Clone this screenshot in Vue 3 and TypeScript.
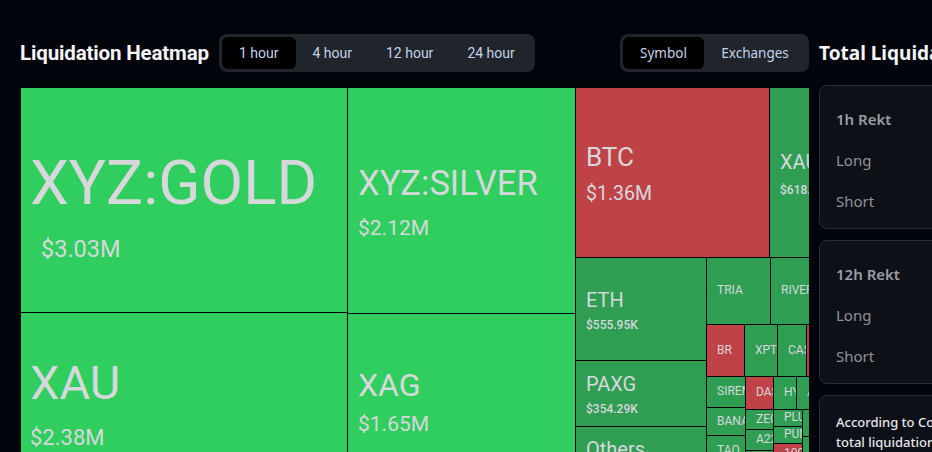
<script setup lang="ts">
type Tone = 'bright' | 'green' | 'red';

interface Cell {
  name: string;
  value?: string;
  x: number;
  y: number;
  w: number;
  h: number;
  tone: Tone;
  size: number;
  valueSize?: number;
  pad: number;
  valuePad?: number;
  gap?: number;
  padTop?: number;
}

const timeTabs = ['1 hour', '4 hour', '12 hour', '24 hour'];
const groupTabs = ['Symbol', 'Exchanges'];

const cells: Cell[] = [
  { name: 'XYZ:GOLD', value: '$3.03M', x: 1, y: 1, w: 326, h: 224, tone: 'bright', size: 62, valueSize: 23.5, pad: 9, valuePad: 11, gap: 16, padTop: 10 },
  { name: 'XAU', value: '$2.38M', x: 1, y: 226, w: 326, h: 182, tone: 'bright', size: 47, valueSize: 22, pad: 9, gap: 15 },
  { name: 'XYZ:SILVER', value: '$2.12M', x: 328, y: 1, w: 227, h: 225, tone: 'bright', size: 34.5, valueSize: 21, pad: 10, gap: 12, padTop: 4 },
  { name: 'XAG', value: '$1.65M', x: 328, y: 227, w: 227, h: 176, tone: 'bright', size: 32, valueSize: 21, pad: 10, gap: 9 },
  { name: 'BTC', value: '$1.36M', x: 556, y: 1, w: 193, h: 169, tone: 'red', size: 26, valueSize: 19.5, pad: 10, gap: 9, padTop: 3 },
  { name: 'XAU', value: '$618.32K', x: 750, y: 1, w: 39, h: 169, tone: 'green', size: 20, valueSize: 12, pad: 10, gap: 9, padTop: 3 },
  { name: 'ETH', value: '$555.95K', x: 556, y: 171, w: 130, h: 102, tone: 'green', size: 20, valueSize: 12, pad: 10, padTop: 4 },
  { name: 'PAXG', value: '$354.29K', x: 556, y: 274, w: 130, h: 65, tone: 'green', size: 20, valueSize: 12, pad: 10, padTop: 2 },
  { name: 'Others', x: 556, y: 340, w: 130, h: 44, tone: 'green', size: 20, pad: 10 },
  { name: 'TRIA', x: 687, y: 171, w: 63, h: 66, tone: 'green', size: 12, pad: 10 },
  { name: 'RIVER', x: 751, y: 171, w: 38, h: 66, tone: 'green', size: 12, pad: 10 },
  { name: 'BR', x: 687, y: 238, w: 37, h: 51, tone: 'red', size: 12, pad: 10 },
  { name: 'XPT', x: 725, y: 238, w: 32, h: 51, tone: 'green', size: 12, pad: 10 },
  { name: 'CAS', x: 758, y: 238, w: 28, h: 51, tone: 'green', size: 12, pad: 10 },
  { name: '', x: 787, y: 238, w: 2, h: 51, tone: 'red', size: 12, pad: 0 },
  { name: 'SIREN', x: 687, y: 290, w: 38, h: 30, tone: 'green', size: 12, pad: 10 },
  { name: 'BANANA', x: 687, y: 321, w: 38, h: 27, tone: 'green', size: 12, pad: 10 },
  { name: 'TAO', x: 687, y: 349, w: 38, h: 30, tone: 'green', size: 12, pad: 10 },
  { name: 'DASH', x: 726, y: 290, w: 27, h: 32, tone: 'red', size: 12, pad: 10 },
  { name: 'ZEC', x: 726, y: 323, w: 27, h: 19, tone: 'green', size: 12, pad: 10 },
  { name: 'A22', x: 726, y: 343, w: 27, h: 20, tone: 'green', size: 12, pad: 10 },
  { name: '', x: 726, y: 364, w: 27, h: 20, tone: 'green', size: 12, pad: 0 },
  { name: 'HYPE', x: 754, y: 290, w: 22, h: 32, tone: 'green', size: 12, pad: 10 },
  { name: 'AV', x: 777, y: 290, w: 12, h: 32, tone: 'green', size: 12, pad: 10 },
  { name: 'PLUME', x: 754, y: 323, w: 28, h: 16, tone: 'green', size: 12, pad: 10 },
  { name: 'PUMP', x: 754, y: 340, w: 28, h: 16, tone: 'green', size: 12, pad: 10 },
  { name: '100', x: 754, y: 357, w: 28, h: 20, tone: 'red', size: 12, pad: 10 },
  { name: '', x: 783, y: 323, w: 6, h: 26, tone: 'green', size: 12, pad: 0 },
  { name: '', x: 783, y: 350, w: 6, h: 30, tone: 'green', size: 12, pad: 0 },
];

function cellStyle(c: Cell) {
  return {
    left: `${c.x}px`,
    top: `${c.y}px`,
    width: `${c.w}px`,
    height: `${c.h}px`,
    paddingLeft: `${c.pad}px`,
    paddingTop: `${c.padTop ?? 0}px`,
    gap: `${c.gap ?? 6}px`,
  };
}

const cards = [
  { title: '1h Rekt', rows: ['Long', 'Short'] },
  { title: '12h Rekt', rows: ['Long', 'Short'] },
];
</script>

<template>
  <div class="page">
    <section class="left">
      <header class="head">
        <h1 class="title">Liquidation Heatmap</h1>
        <div class="tabs time">
          <span v-for="(t, i) in timeTabs" :key="t" class="tab" :class="{ active: i === 0 }">{{ t }}</span>
        </div>
        <div class="tabs group">
          <span v-for="(t, i) in groupTabs" :key="t" class="tab" :class="{ active: i === 0 }">{{ t }}</span>
        </div>
      </header>
      <div class="map">
        <div
          v-for="(c, i) in cells"
          :key="i"
          class="cell"
          :class="c.tone"
          :style="cellStyle(c)"
        >
          <span class="name" :style="{ fontSize: c.size + 'px' }">{{ c.name }}</span>
          <span
            v-if="c.value"
            class="value"
            :class="{ small: (c.valueSize ?? 0) <= 12 }"
            :style="{ fontSize: c.valueSize + 'px', marginLeft: (c.valuePad ?? 0) + 'px' }"
          >{{ c.value }}</span>
        </div>
      </div>
    </section>

    <aside class="right">
      <h2 class="side-title">Total Liquidations</h2>
      <div v-for="card in cards" :key="card.title" class="card">
        <div class="card-title">{{ card.title }}</div>
        <div v-for="r in card.rows" :key="r" class="card-row">{{ r }}</div>
      </div>
      <div class="card note">
        According to Coinglass data,<br />
        total liquidations
      </div>
    </aside>
  </div>
</template>

<style>
html,
body {
  margin: 0;
  background: #02040c;
  overflow: hidden;
}
</style>

<style scoped>
.page {
  display: flex;
  gap: 10px;
  width: 932px;
  height: 452px;
  padding: 34px 0 0 20px;
  box-sizing: border-box;
  overflow: hidden;
  background: #02040c;
}
.left {
  flex: 0 0 789px;
}
.head {
  display: flex;
  align-items: center;
  height: 38px;
  margin-bottom: 15px;
}
.title {
  width: 189px;
  margin: 0 10px 0 0;
  font: 700 20.5px/24px Roboto, sans-serif;
  letter-spacing: -0.15px;
  color: #f4f5f7;
  white-space: nowrap;
}
.tabs {
  display: flex;
  height: 38px;
  padding: 3px;
  box-sizing: border-box;
  background: #20242b;
  border-radius: 8px;
}
.group {
  margin-left: auto;
  font-family: "Noto Sans", sans-serif;
}
.time {
  font-family: Roboto, sans-serif;
}
.tab {
  display: flex;
  align-items: center;
  padding: 0 17px;
  font-size: 14px;
  color: #c3d4ea;
  border-radius: 6px;
  white-space: nowrap;
}
.group .tab {
  font-size: 13.5px;
  padding: 0 17.2px;
}
.tab.active {
  background: #000;
}
.map {
  position: relative;
  height: 400px;
  background: #000;
  overflow: hidden;
}
.cell {
  position: absolute;
  display: flex;
  flex-direction: column;
  justify-content: center;
  align-items: flex-start;
  box-sizing: border-box;
  overflow: hidden;
  font-family: Roboto, sans-serif;
  color: #d6d8dc;
  white-space: nowrap;
}
.cell.bright {
  background: #2fce5e;
}
.cell.green {
  background: #2f9e53;
}
.cell.red {
  background: #bf4247;
}
.name {
  line-height: 1.15;
}
.value {
  line-height: 1.2;
}
.value.small {
  font-weight: 500;
}
.right {
  flex: 0 0 300px;
  display: flex;
  flex-direction: column;
  gap: 11px;
  font-family: "Noto Sans", sans-serif;
}
.side-title {
  margin: 7px 0 9px;
  font: 700 19px/24px "Noto Sans", sans-serif;
  color: #f4f5f7;
  white-space: nowrap;
}
.card {
  padding: 13px 16px 6px;
  background: #0d1017;
  border: 1px solid #2a2d33;
  border-radius: 8px;
  box-sizing: border-box;
}
.card-title {
  height: 41px;
  font-size: 15px;
  font-weight: 600;
  line-height: 41px;
  color: #9a9da3;
}
.card-row {
  height: 41px;
  font-size: 15px;
  line-height: 41px;
  color: #8f9298;
}
.note {
  padding-top: 16px;
  font-size: 13px;
  font-weight: 500;
  line-height: 20px;
  color: #e5e7eb;
  white-space: nowrap;
}
</style>
